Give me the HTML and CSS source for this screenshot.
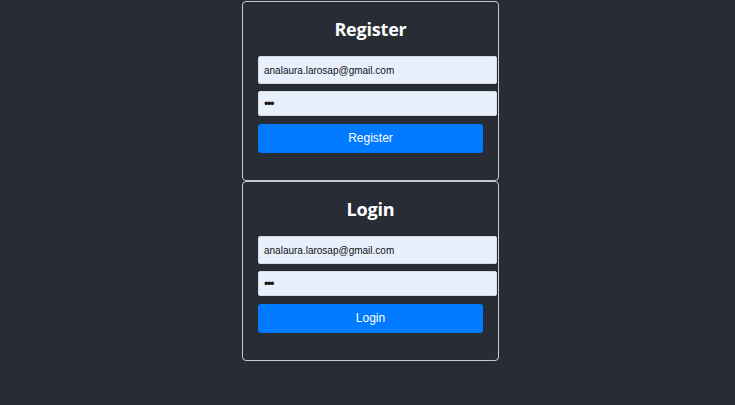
FILE: index.html
```html
<!DOCTYPE html>
<html lang="en">
<head>
<meta charset="utf-8">
<title>Auth</title>
<link rel="stylesheet" href="styles.css">
</head>
<body>
<div class="page">
  <form class="card">
    <h2 class="title">Register</h2>
    <input class="field field-email" type="email" value="analaura.larosap@gmail.com">
    <input class="field field-pass" type="password" value="123">
    <button class="btn" type="button">Register</button>
  </form>
  <form class="card">
    <h2 class="title">Login</h2>
    <input class="field field-email" type="email" value="analaura.larosap@gmail.com">
    <input class="field field-pass" type="password" value="123">
    <button class="btn" type="button">Login</button>
  </form>
</div>
</body>
</html>
```

FILE: styles.css
```css
html, body {
  margin: 0;
  padding: 0;
  background: #282c34;
  height: 100%;
}
body {
  font-family: "Liberation Sans", Arial, sans-serif;
}
.page {
  display: flex;
  flex-direction: column;
  align-items: center;
  padding-top: 1px;
  padding-left: 6px;
}
.card {
  box-sizing: border-box;
  width: 257px;
  height: 180px;
  padding: 0 15px;
  border: 1px solid #c9cbcf;
  border-radius: 4px;
  display: flex;
  flex-direction: column;
  align-items: flex-start;
  margin: 0;
}
.title {
  align-self: stretch;
  margin: 15px 0 15px;
  text-align: center;
  font-family: "Open Sans", "Noto Sans", sans-serif;
  font-weight: 700;
  font-size: 18px;
  line-height: 24px;
  letter-spacing: -0.2px;
  color: #ffffff;
}
.field {
  box-sizing: border-box;
  width: calc(100% + 14px);
  margin: 0;
  padding: 0 5px;
  border: 1px solid #d5d9e0;
  border-radius: 2px;
  background: #e8f0fe;
  color: #111;
  font-family: "Liberation Sans", Arial, sans-serif;
  font-size: 10px;
  outline: none;
}
.field-email {
  height: 28px;
  margin-bottom: 7px;
}
.field-pass {
  height: 25px;
  margin-bottom: 8px;
  font-size: 13px;
  letter-spacing: -1.5px;
}
.btn {
  width: 100%;
  height: 29px;
  margin: 0;
  padding: 0 0 2px;
  border: none;
  border-radius: 3px;
  background: #007bff;
  color: #ffffff;
  font-family: "Liberation Sans", Arial, sans-serif;
  font-size: 12px;
  cursor: pointer;
}
```
